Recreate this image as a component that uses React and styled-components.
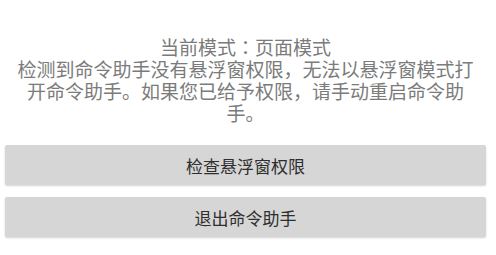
import React from 'react';
import styled, { createGlobalStyle } from 'styled-components';

const Global = createGlobalStyle`
    html, body {
        margin: 0;
        padding: 0;
        background: #ffffff;
    }
    body {
        font-family: "Noto Sans CJK SC", "Roboto", sans-serif;
    }
`

const Page = styled.div`
    width: 496px;
    height: 255px;
    box-sizing: border-box;
    padding: 36px 10px 0 5px;
    display: flex;
    flex-direction: column;
`

const Message = styled.div`
    color: #7b7b7b;
    font-size: 19px;
    line-height: 22px;
    text-align: center;
    padding: 0 8px;
    margin-bottom: 21px;
    p {
        margin: 0;
    }
`

// centred full-width colon, as on the device
const Colon = styled.span`
    font-family: "Noto Sans CJK JP", sans-serif;
`

const Actions = styled.div`
    display: flex;
    flex-direction: column;
    gap: 12px;
`

const Button = styled.button`
    height: 40px;
    width: 100%;
    border: none;
    border-radius: 2px;
    background: #d6d6d6;
    box-shadow: 0 1px 2px rgba(0, 0, 0, 0.18);
    color: #2e2e2e;
    font-family: "Noto Sans CJK SC", "Roboto", sans-serif;
    font-size: 17px;
    padding: 0;
    cursor: pointer;
`

const App = () => {
    return (
        <Page>
            <Global />
            <Message>
                <p>当前模式<Colon>：</Colon>页面模式</p>
                <p>检测到命令助手没有悬浮窗权限，无法以悬浮窗模式打开命令助手。如果您已给予权限，请手动重启命令助手。</p>
            </Message>
            <Actions>
                <Button>检查悬浮窗权限</Button>
                <Button>退出命令助手</Button>
            </Actions>
        </Page>
    )
}

export default App
